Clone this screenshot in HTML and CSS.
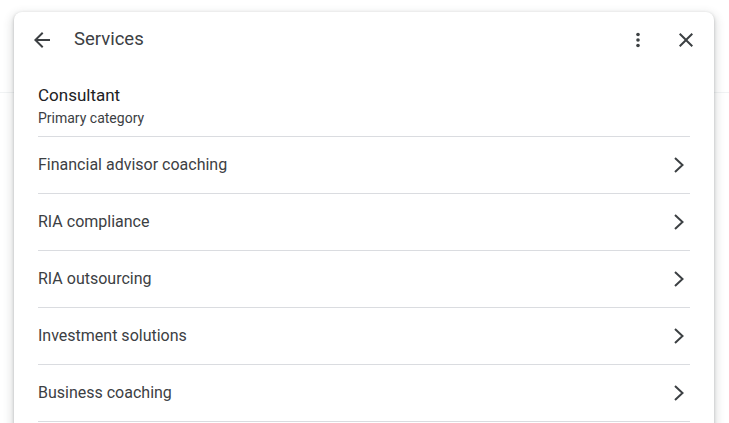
FILE: index.html
```html
<!DOCTYPE html>
<html>
<head>
<meta charset="utf-8">
<link rel="stylesheet" href="styles.css">
</head>
<body>
<div class="backdrop">
  <div class="bg-bar"></div>
  <div class="card">
    <div class="header">
      <button class="icon-btn back" aria-label="Back">
        <svg width="24" height="24" viewBox="0 0 24 24"><path d="M20 11H7.83l5.59-5.59L12 4l-8 8 8 8 1.41-1.41L7.83 13H20v-2z" fill="#3c4043"/></svg>
      </button>
      <div class="title">Services</div>
      <button class="icon-btn more" aria-label="More">
        <svg width="24" height="24" viewBox="0 0 24 24"><circle cx="12" cy="6.5" r="1.8" fill="#3c4043"/><circle cx="12" cy="12" r="1.8" fill="#3c4043"/><circle cx="12" cy="17.5" r="1.8" fill="#3c4043"/></svg>
      </button>
      <button class="icon-btn close" aria-label="Close">
        <svg width="24" height="24" viewBox="0 0 24 24"><path d="M19 6.41L17.59 5 12 10.59 6.41 5 5 6.41 10.59 12 5 17.59 6.41 19 12 13.41 17.59 19 19 17.59 13.41 12z" fill="#3c4043"/></svg>
      </button>
    </div>
    <div class="category">
      <div class="cat-name">Consultant</div>
      <div class="cat-label">Primary category</div>
    </div>
    <ul class="list">
      <li class="row"><span>Financial advisor coaching</span><svg class="chev" width="24" height="24" viewBox="0 0 24 24"><path d="M9 5l7.5 7L9 19" fill="none" stroke="#3c4043" stroke-width="2"/></svg></li>
      <li class="row"><span>RIA compliance</span><svg class="chev" width="24" height="24" viewBox="0 0 24 24"><path d="M9 5l7.5 7L9 19" fill="none" stroke="#3c4043" stroke-width="2"/></svg></li>
      <li class="row"><span>RIA outsourcing</span><svg class="chev" width="24" height="24" viewBox="0 0 24 24"><path d="M9 5l7.5 7L9 19" fill="none" stroke="#3c4043" stroke-width="2"/></svg></li>
      <li class="row"><span>Investment solutions</span><svg class="chev" width="24" height="24" viewBox="0 0 24 24"><path d="M9 5l7.5 7L9 19" fill="none" stroke="#3c4043" stroke-width="2"/></svg></li>
      <li class="row"><span>Business coaching</span><svg class="chev" width="24" height="24" viewBox="0 0 24 24"><path d="M9 5l7.5 7L9 19" fill="none" stroke="#3c4043" stroke-width="2"/></svg></li>
    </ul>
  </div>
</div>
</body>
</html>
```

FILE: styles.css
```css
html, body {
  margin: 0;
  padding: 0;
  background: #fff;
  overflow: hidden;
  font-family: Roboto, "Liberation Sans", Arial, sans-serif;
}
.backdrop {
  position: relative;
  width: 729px;
  height: 423px;
  padding: 12px 15px 0 14px;
  box-sizing: border-box;
  overflow: hidden;
}
.bg-bar {
  position: absolute;
  left: 0;
  right: 0;
  top: 92px;
  height: 1px;
  background: #f1f3f4;
}
.card {
  position: relative;
  width: 700px;
  height: 460px;
  background: #fff;
  border-radius: 8px;
  box-shadow: 0 1px 3px rgba(60,64,67,0.3), 0 4px 8px 3px rgba(60,64,67,0.15);
  padding: 0 24px;
  box-sizing: border-box;
}
.header {
  height: 56px;
  display: flex;
  align-items: center;
  margin: 0 -12px;
}
.icon-btn {
  width: 48px;
  height: 48px;
  border: none;
  background: none;
  padding: 0;
  display: flex;
  align-items: center;
  justify-content: center;
}
.back {
  margin-left: -8px;
}
.title {
  flex: 1;
  font-size: 18.5px;
  color: #3c4043;
  margin-left: 8px;
  margin-top: -2px;
}
.close {
  margin-right: -8px;
}
.category {
  padding-top: 17px;
  height: 69px;
  box-sizing: border-box;
  border-bottom: 1px solid #dadce0;
}
.cat-name {
  font-size: 17px;
  font-weight: 400;
  color: #202124;
  line-height: 20px;
}
.cat-label {
  font-size: 14px;
  color: #3c4043;
  line-height: 18px;
  margin-top: 4px;
}
.list {
  list-style: none;
  margin: 0;
  padding: 0;
}
.row {
  height: 57px;
  box-sizing: border-box;
  border-bottom: 1px solid #dadce0;
  padding-bottom: 2px;
  display: flex;
  align-items: center;
  justify-content: space-between;
  font-size: 16px;
  color: #3c4043;
}
.chev {
  margin-right: 0;
  margin-top: 2px;
}
```
